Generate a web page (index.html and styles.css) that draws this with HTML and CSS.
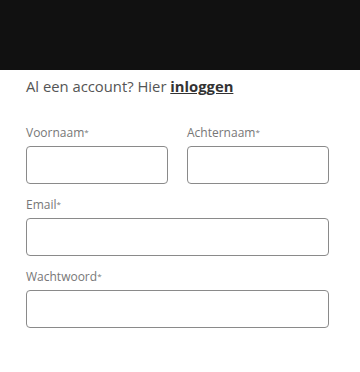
FILE: index.html
```html
<!DOCTYPE html>
<html lang="nl">
<head>
  <meta charset="UTF-8" />
  <meta name="viewport" content="width=device-width, initial-scale=1.0"/>
  <title>Registreren</title>
  <link rel="stylesheet" href="styles.css">
</head>
<body>
  <div class="topbar"></div>

  <div class="container">
    <p class="login-hint">Al een account? Hier <a href="#">inloggen</a></p>

    <form class="register-form">
      <div class="row">
        <div class="field">
          <label for="firstName">Voornaam<span class="req">*</span></label>
          <input type="text" id="firstName" />
        </div>
        <div class="field">
          <label for="lastName">Achternaam<span class="req">*</span></label>
          <input type="text" id="lastName" />
        </div>
      </div>

      <div class="field">
        <label for="email">Email<span class="req">*</span></label>
        <input type="email" id="email" />
      </div>

      <div class="field">
        <label for="password">Wachtwoord<span class="req">*</span></label>
        <input type="password" id="password" />
      </div>
    </form>
  </div>
</body>
</html>
```

FILE: styles.css
```css
:root {
  --dark: #111;
  --text: #555;
  --label: #777;
  --border: #8a8a8a;
}

body {
  font-family: 'Open Sans', sans-serif;
  margin: 0;
  background: #fff;
  color: var(--text);
}
.topbar {
  height: 70px;
  background: var(--dark);
}
.container {
  padding: 0 31px 0 26px;
}
.login-hint {
  margin: 6px 0 27px;
  font-size: 14.8px;
  line-height: 20px;
}
.login-hint a {
  color: #333;
  font-weight: 700;
  text-decoration: underline;
}
.register-form {
  display: flex;
  flex-direction: column;
  gap: 11px;
}
.row {
  display: flex;
  gap: 19px;
}
.row .field {
  flex: 1;
}
.field {
  display: flex;
  flex-direction: column;
  gap: 4px;
}
label {
  font-size: 12px;
  line-height: 18px;
  color: var(--label);
}
.req {
  font-size: 8px;
  vertical-align: 2px;
}
input {
  box-sizing: border-box;
  height: 38px;
  width: 100%;
  margin: 0;
  padding: 0 10px;
  font-size: 14px;
  font-family: inherit;
  border: 1px solid var(--border);
  border-radius: 4px;
  background: #fff;
}
```
